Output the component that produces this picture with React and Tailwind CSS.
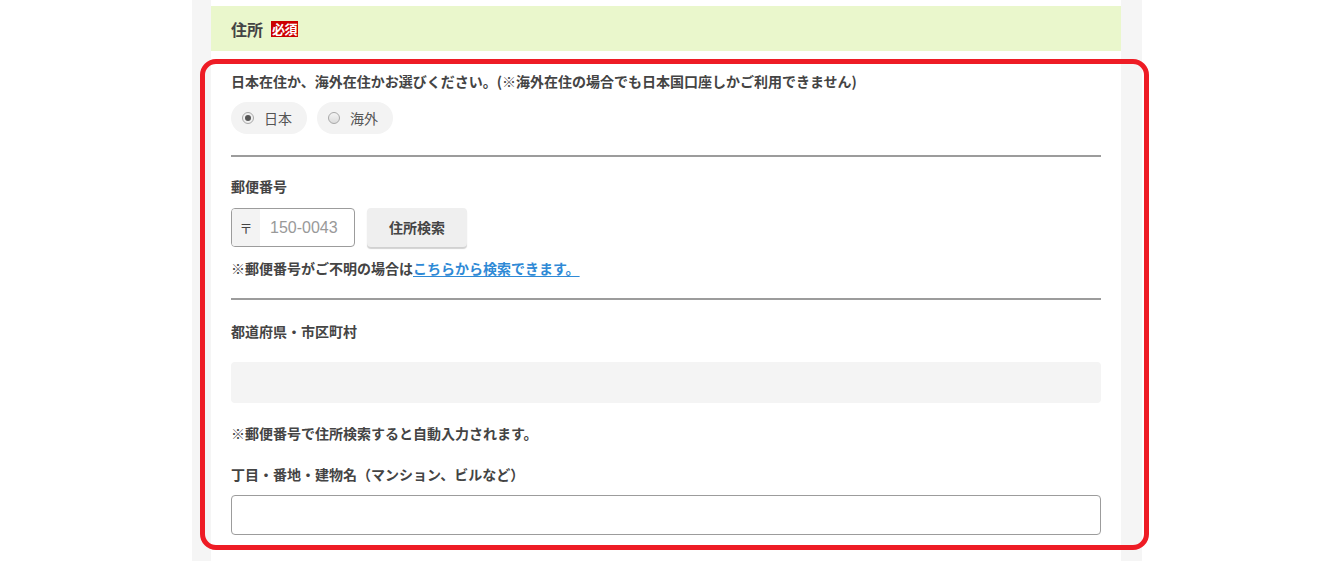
import React from "react";

function Radio({ checked, label }) {
  return (
    <label className="flex items-center h-[32px] rounded-full bg-[#f3f3f3] pl-[11px] pr-[15px] gap-[10px] cursor-pointer">
      <span
        className={
          "w-[12px] h-[12px] rounded-full border border-[#a8a8a8] flex items-center justify-center " +
          (checked ? "bg-[#f0f0f0]" : "bg-gradient-to-b from-[#f4f4f4] to-[#dcdcdc]")
        }
      >
        {checked && <span className="w-[6px] h-[6px] rounded-full bg-[#555]" />}
      </span>
      <span className="text-[14px] leading-[20px] text-[#555]">{label}</span>
    </label>
  );
}

export default function App() {
  const font = { fontFamily: '"Noto Sans CJK JP", "Noto Sans", sans-serif' };
  return (
    <div className="relative min-h-[561px] bg-white" style={font}>
      <div className="ml-[192px] w-[950px] min-h-[561px] bg-[#f5f5f5] pl-[19px] pr-[21px]">
        <div className="bg-white min-h-[561px] pt-[6px]">
          <div className="h-[45px] bg-[#eaf7cc] px-5 flex items-center gap-[8px]">
            <span className="text-[16px] font-bold text-[#444] leading-none">住所</span>
            <span className="bg-[#cc0000] text-white text-[13px] font-bold leading-[16px] h-[16px] px-[1px] tracking-[-0.5px]">
              必須
            </span>
          </div>

          <div className="px-5 pt-[20px] text-[#444]">
            <p className="text-[14px] leading-[20px] font-bold">
              日本在住か、海外在住かお選びください。(※海外在住の場合でも日本国口座しかご利用できません)
            </p>
            <div className="flex gap-[10px] mt-[11px]">
              <Radio checked label="日本" />
              <Radio label="海外" />
            </div>

            <div className="mt-[21px] h-[2px] bg-[#9c9c9c]" />

            <p className="mt-[19px] text-[14px] leading-[20px] font-bold">郵便番号</p>
            <div className="mt-[12px] flex items-center gap-[12px]">
              <div className="flex h-[39px] w-[124px] border border-[#9c9c9c] rounded-[4px] overflow-hidden">
                <span className="w-[28px] bg-[#f3f3f3] flex items-center justify-center text-[13px] text-[#444]">
                  〒
                </span>
                <input
                  className="flex-1 min-w-0 pl-[10px] text-[16px] text-[#444] placeholder-[#999] outline-none"
                  style={{ fontFamily: '"Liberation Sans", Arial, sans-serif' }}
                  placeholder="150-0043"
                />
              </div>
              <button className="h-[39px] w-[100px] rounded-[4px] bg-[#efefef] shadow-[0_2px_1px_rgba(0,0,0,0.18)] text-[14px] font-bold text-[#444]">
                住所検索
              </button>
            </div>
            <p className="mt-[11px] text-[14px] leading-[20px] font-bold">
              ※郵便番号がご不明の場合は
              <a href="#" className="text-[#2f8ad6] underline underline-offset-2">
                こちらから検索できます。
              </a>
            </p>

            <div className="mt-[20px] h-[2px] bg-[#9c9c9c]" />

            <p className="mt-[21px] text-[14px] leading-[20px] font-bold">都道府県・市区町村</p>
            <div className="mt-[21px] h-[41px] rounded-[4px] bg-[#f4f4f4]" />
            <p className="mt-[20px] text-[14px] leading-[20px] font-bold">
              ※郵便番号で住所検索すると自動入力されます。
            </p>
            <p className="mt-[21px] text-[14px] leading-[20px] font-bold">
              丁目・番地・建物名（マンション、ビルなど）
            </p>
            <input className="mt-[11px] block w-full h-[40px] border border-[#9c9c9c] rounded-[4px] px-3 text-[14px] outline-none" />
          </div>
        </div>
      </div>

      <div className="absolute left-[200px] top-[59px] w-[949px] h-[491px] border-[5px] border-[#ee1c25] rounded-[16px] pointer-events-none" />
    </div>
  );
}
